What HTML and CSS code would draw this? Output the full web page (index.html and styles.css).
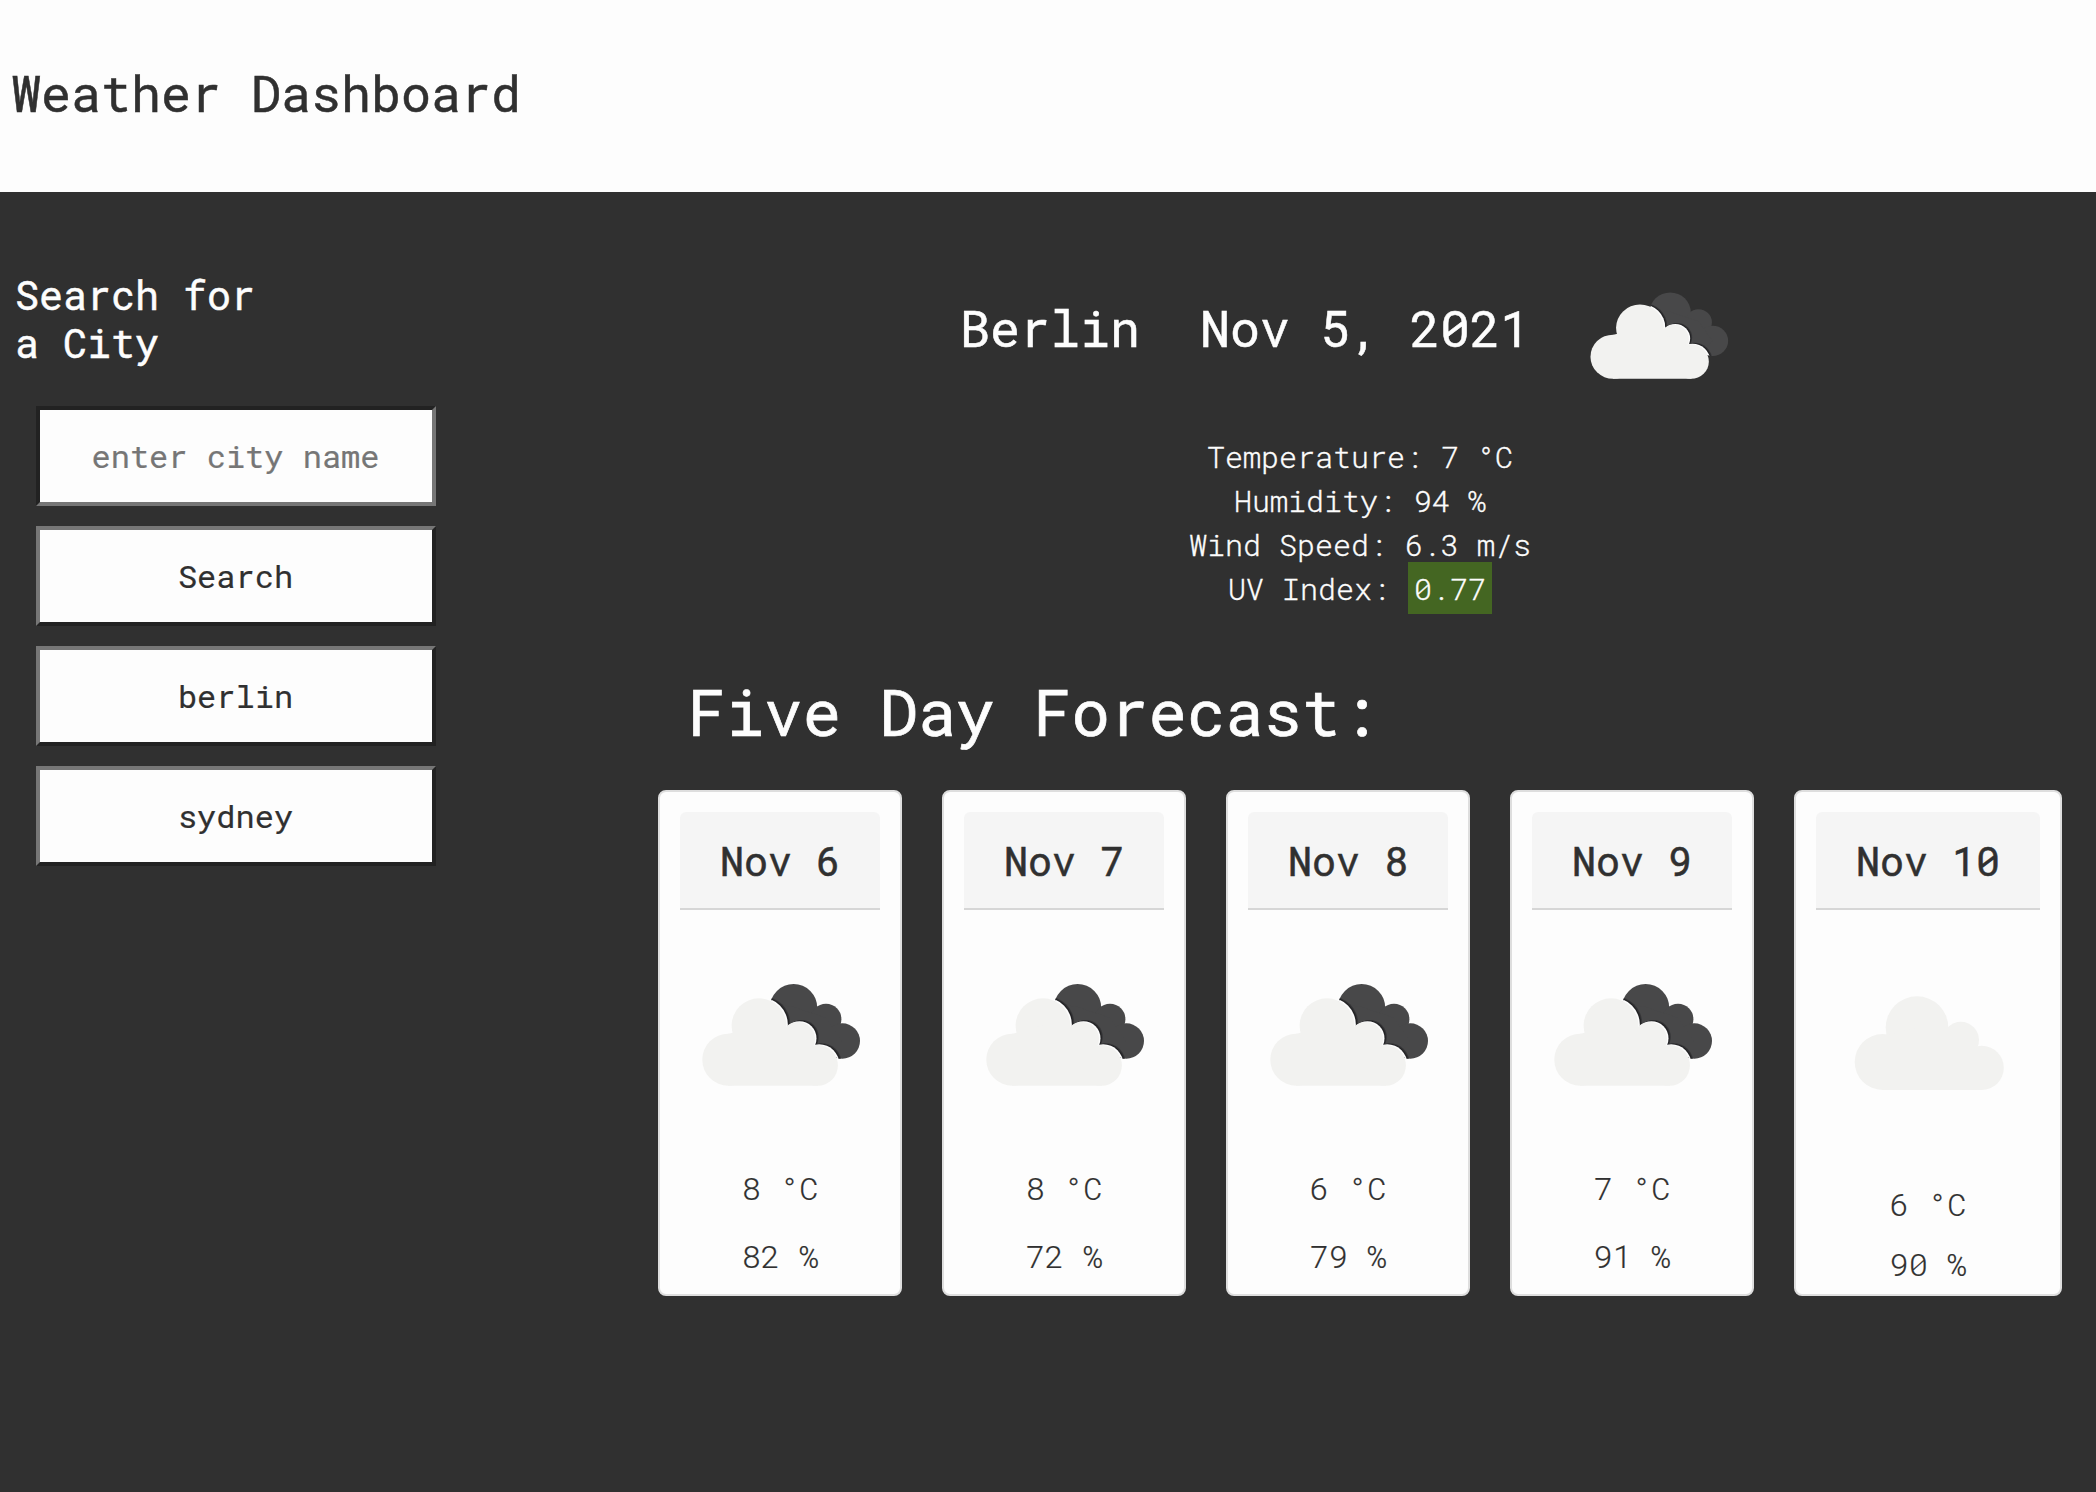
FILE: index.html
```html
<!DOCTYPE html>
<html lang="en">
<head>
<meta charset="utf-8">
<title>Weather Dashboard</title>
<link rel="stylesheet" href="styles.css">
</head>
<body>
<svg class="defs" width="0" height="0" aria-hidden="true">
  <defs>
    <g id="front">
      <circle cx="48.3" cy="99.7" r="26"/>
      <circle cx="79" cy="65.7" r="27.4"/>
      <circle cx="118" cy="79" r="17"/>
      <circle cx="137.6" cy="105.4" r="20.3"/>
      <path d="M48 125.7V74L79 65L118 78L138 90V125.7Z"/>
    </g>
    <g id="back">
      <circle cx="113.6" cy="47.6" r="23.6"/>
      <circle cx="146" cy="59.2" r="15.4"/>
      <circle cx="162.3" cy="81" r="17.7"/>
      <path d="M100 45L114 47L146 58L162 81L150 95L120 90Z"/>
    </g>
    <clipPath id="behind">
      <circle cx="113.6" cy="47.6" r="23.6"/>
      <circle cx="146" cy="59.2" r="15.4"/>
      <circle cx="162.3" cy="81" r="17.7"/>
      <path d="M100 45L114 47L146 58L162 81L150 95L120 90Z"/>
    </clipPath>
    <symbol id="broken-clouds" viewBox="0 0 200 150" preserveAspectRatio="none">
      <use href="#back" fill="#484849"/>
      <g clip-path="url(#behind)">
        <use href="#front" fill="#353537" transform="translate(3.8 -2)"/>
        <use href="#front" fill="#222224" transform="translate(2.8 -1.4)"/>
        <use href="#front" fill="#fdfdfd" transform="translate(1.5 -.8)"/>
      </g>
      <use href="#front" fill="#f2f2f0"/>
    </symbol>
    <symbol id="cloud" viewBox="0 0 224 150">
      <g fill="#f2f2f0">
        <circle cx="66.6" cy="102" r="27.9"/>
        <circle cx="101" cy="67.6" r="31.3"/>
        <circle cx="144.8" cy="80" r="18.2"/>
        <circle cx="165.7" cy="107.8" r="22.1"/>
        <path d="M66 129.9V76L101 68L145 76L166 95V129.9Z"/>
      </g>
    </symbol>
  </defs>
</svg>
<header class="banner"><h1>Weather Dashboard</h1></header>
<div class="layout">
  <aside class="sidebar">
    <h3>Search for<br>a City</h3>
    <form class="search">
      <input class="field" type="text" placeholder="enter city name">
      <button class="field" type="button">Search</button>
      <button class="field" type="button">berlin</button>
      <button class="field" type="button">sydney</button>
    </form>
  </aside>
  <main class="main">
    <div class="current">
      <h2>Berlin&nbsp; Nov 5, 2021</h2>
      <svg class="current-icon"><use href="#broken-clouds"/></svg>
    </div>
    <div class="details">
      <p>Temperature: 7 °C</p>
      <p>Humidity: 94 %</p>
      <p>Wind Speed: 6.3 m/s</p>
      <p>UV Index: <span class="uv">0.77</span></p>
    </div>
    <h2 class="forecast-title">Five Day Forecast:</h2>
    <div class="cards">
      <section class="card"><h4>Nov 6</h4><svg class="icon"><use href="#broken-clouds"/></svg><p>8 °C</p><p>82 %</p></section>
      <section class="card"><h4>Nov 7</h4><svg class="icon"><use href="#broken-clouds"/></svg><p>8 °C</p><p>72 %</p></section>
      <section class="card"><h4>Nov 8</h4><svg class="icon"><use href="#broken-clouds"/></svg><p>6 °C</p><p>79 %</p></section>
      <section class="card"><h4>Nov 9</h4><svg class="icon"><use href="#broken-clouds"/></svg><p>7 °C</p><p>91 %</p></section>
      <section class="card wide"><h4>Nov 10</h4><svg class="icon"><use href="#cloud"/></svg><p>6 °C</p><p>90 %</p></section>
    </div>
  </main>
</div>
</body>
</html>
```
FILE: styles.css
```css
* { box-sizing: border-box; margin: 0; }
body {
  min-height: 1492px;
  background: #303030;
  color: #fdfdfd;
  font-family: "Roboto Mono", "DejaVu Sans Mono", "Liberation Mono", monospace;
  font-weight: 300;
}
h1, h2, h3, h4 { font-weight: 400; -webkit-text-stroke: .5px currentColor; }
.defs { display: block; }
.banner { height: 192px; padding-left: 11px; background: #fdfdfd; color: #303030; }
h1 { font-size: 50px; line-height: 186px; }
.layout { display: flex; }
.sidebar { width: 658px; padding-top: 79px; }
h3 { padding-left: 15px; font-size: 40px; line-height: 48px; }
.search { display: flex; flex-direction: column; gap: 20px; width: 400px; margin: 39px 0 0 36px; }
.field {
  width: 400px;
  height: 100px;
  padding: 0 1px 2px 0;
  border: 4px solid;
  border-color: #767676 #222 #222 #767676;
  border-radius: 0;
  background: #fdfdfd;
  color: #303030;
  font: 400 32px "Roboto Mono", "DejaVu Sans Mono", "Liberation Mono", monospace;
  text-align: center;
  -webkit-text-stroke: .2px;
}
input.field { border-color: #222 #767676 #767676 #222; }
.field::placeholder { color: #767676; opacity: 1; }
.main { width: 1404px; padding-top: 76px; }
.current { display: flex; height: 132px; padding-left: 302px; }
.current h2 { width: 610.5px; font-size: 50px; line-height: 120px; white-space: nowrap; }
.current-icon { width: 174.6px; height: 127.5px; margin-top: 3.5px; }
.details { margin-top: 35px; font-size: 30px; line-height: 44px; text-align: center; -webkit-text-stroke: .35px currentColor; }
.uv { padding: 7px 6px 6px; background: #446622; }
.forecast-title { margin: 58px 0 37px; padding-left: 29.5px; font-size: 64px; line-height: 84px; -webkit-text-stroke-width: .7px; }
.cards { display: flex; gap: 40px; }
.card {
  width: 244px;
  height: 506px;
  flex: none;
  padding: 20px;
  border: 2px solid #dedede;
  border-radius: 8px;
  background: #fdfdfd;
  color: #303030;
  text-align: center;
}
.card.wide { width: 268px; }
h4 { height: 98px; border-bottom: 2px solid #d6d6d6; border-radius: 6px 6px 0 0; background: #f5f5f5; font-size: 40px; line-height: 97px; }
.icon { display: block; width: 100%; height: 150px; margin: 50px 0 58px; }
.card p { font-size: 32px; line-height: 40px; -webkit-text-stroke: .2px currentColor; }
.card p + p { margin-top: 28px; }
.wide .icon { margin-bottom: 74px; }
.wide p + p { margin-top: 20px; }
```
